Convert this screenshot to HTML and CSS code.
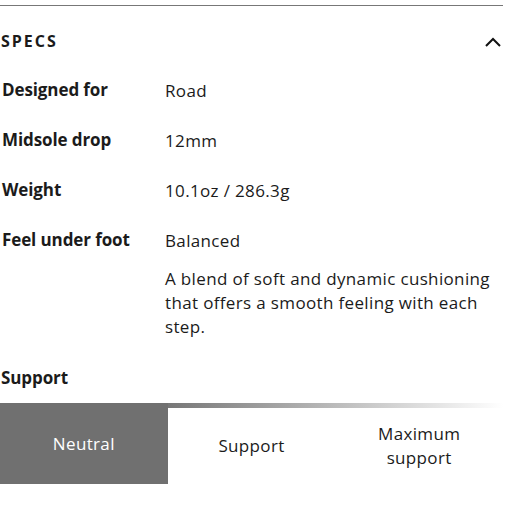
FILE: index.html
```html
<!DOCTYPE html>
<html>
<head>
<meta charset="utf-8">
<link rel="stylesheet" href="styles.css">
</head>
<body>
<div class="panel">
  <div class="header">
    <span class="title">SPECS</span>
    <svg class="chev" width="18" height="12" viewBox="0 0 18 12"><polyline points="2,10 9,3 16,10" fill="none" stroke="#111" stroke-width="2"/></svg>
  </div>
  <div class="row"><div class="label">Designed for</div><div class="value">Road</div></div>
  <div class="row"><div class="label">Midsole drop</div><div class="value">12mm</div></div>
  <div class="row"><div class="label">Weight</div><div class="value">10.1oz / 286.3g</div></div>
  <div class="row feel"><div class="label">Feel under foot</div><div class="value">Balanced<p class="desc">A blend of soft and dynamic cushioning that offers a smooth feeling with each step.</p></div></div>
  <div class="support-label">Support</div>
  <div class="segments">
    <div class="seg active">Neutral</div>
    <div class="seg">Support</div>
    <div class="seg">Maximum<br>support</div>
  </div>
</div>
</body>
</html>
```
FILE: styles.css
```css
html, body { margin: 0; padding: 0; background: #fff; }
body { font-family: "Open Sans", "Noto Sans", sans-serif; color: #1b1b1b; }
.panel { width: 503px; padding-top: 5px; }
.header {
  border-top: 1px solid #777;
  height: 72px;
  display: flex; align-items: center; justify-content: space-between;
}
.title { font-weight: 700; font-size: 16px; letter-spacing: 2px; padding-left: 1px; margin-bottom: 2px; }
.chev { margin-right: 1px; margin-bottom: 1px; }
.row { display: grid; grid-template-columns: 165px 1fr; min-height: 50px; align-items: start; }
.label { font-weight: 700; font-size: 17px; line-height: 24px; padding-left: 2px; letter-spacing: -0.1px; }
.value { font-size: 17px; line-height: 24px; letter-spacing: 0.35px; padding-top: 1px; }
.desc { margin: 14px 0 0 0; line-height: 24px; }
.feel { min-height: 0; padding-bottom: 27px; }
.support-label { font-weight: 700; font-size: 17px; line-height: 24px; padding-left: 1px; height: 37px; letter-spacing: -0.1px; }
.segments {
  display: grid; grid-template-columns: repeat(3, 1fr);
  height: 81px; padding-top: 5px; box-sizing: border-box;
  background: linear-gradient(90deg, #707070 30%, #ffffff 100%) top left / 100% 5px no-repeat;
}
.seg { display: flex; align-items: center; justify-content: center; text-align: center; font-size: 17px; line-height: 24px; letter-spacing: 0.35px; }
.seg.active { background: #707070; color: #fff; margin-top: -5px; font-weight: 500; }
```
